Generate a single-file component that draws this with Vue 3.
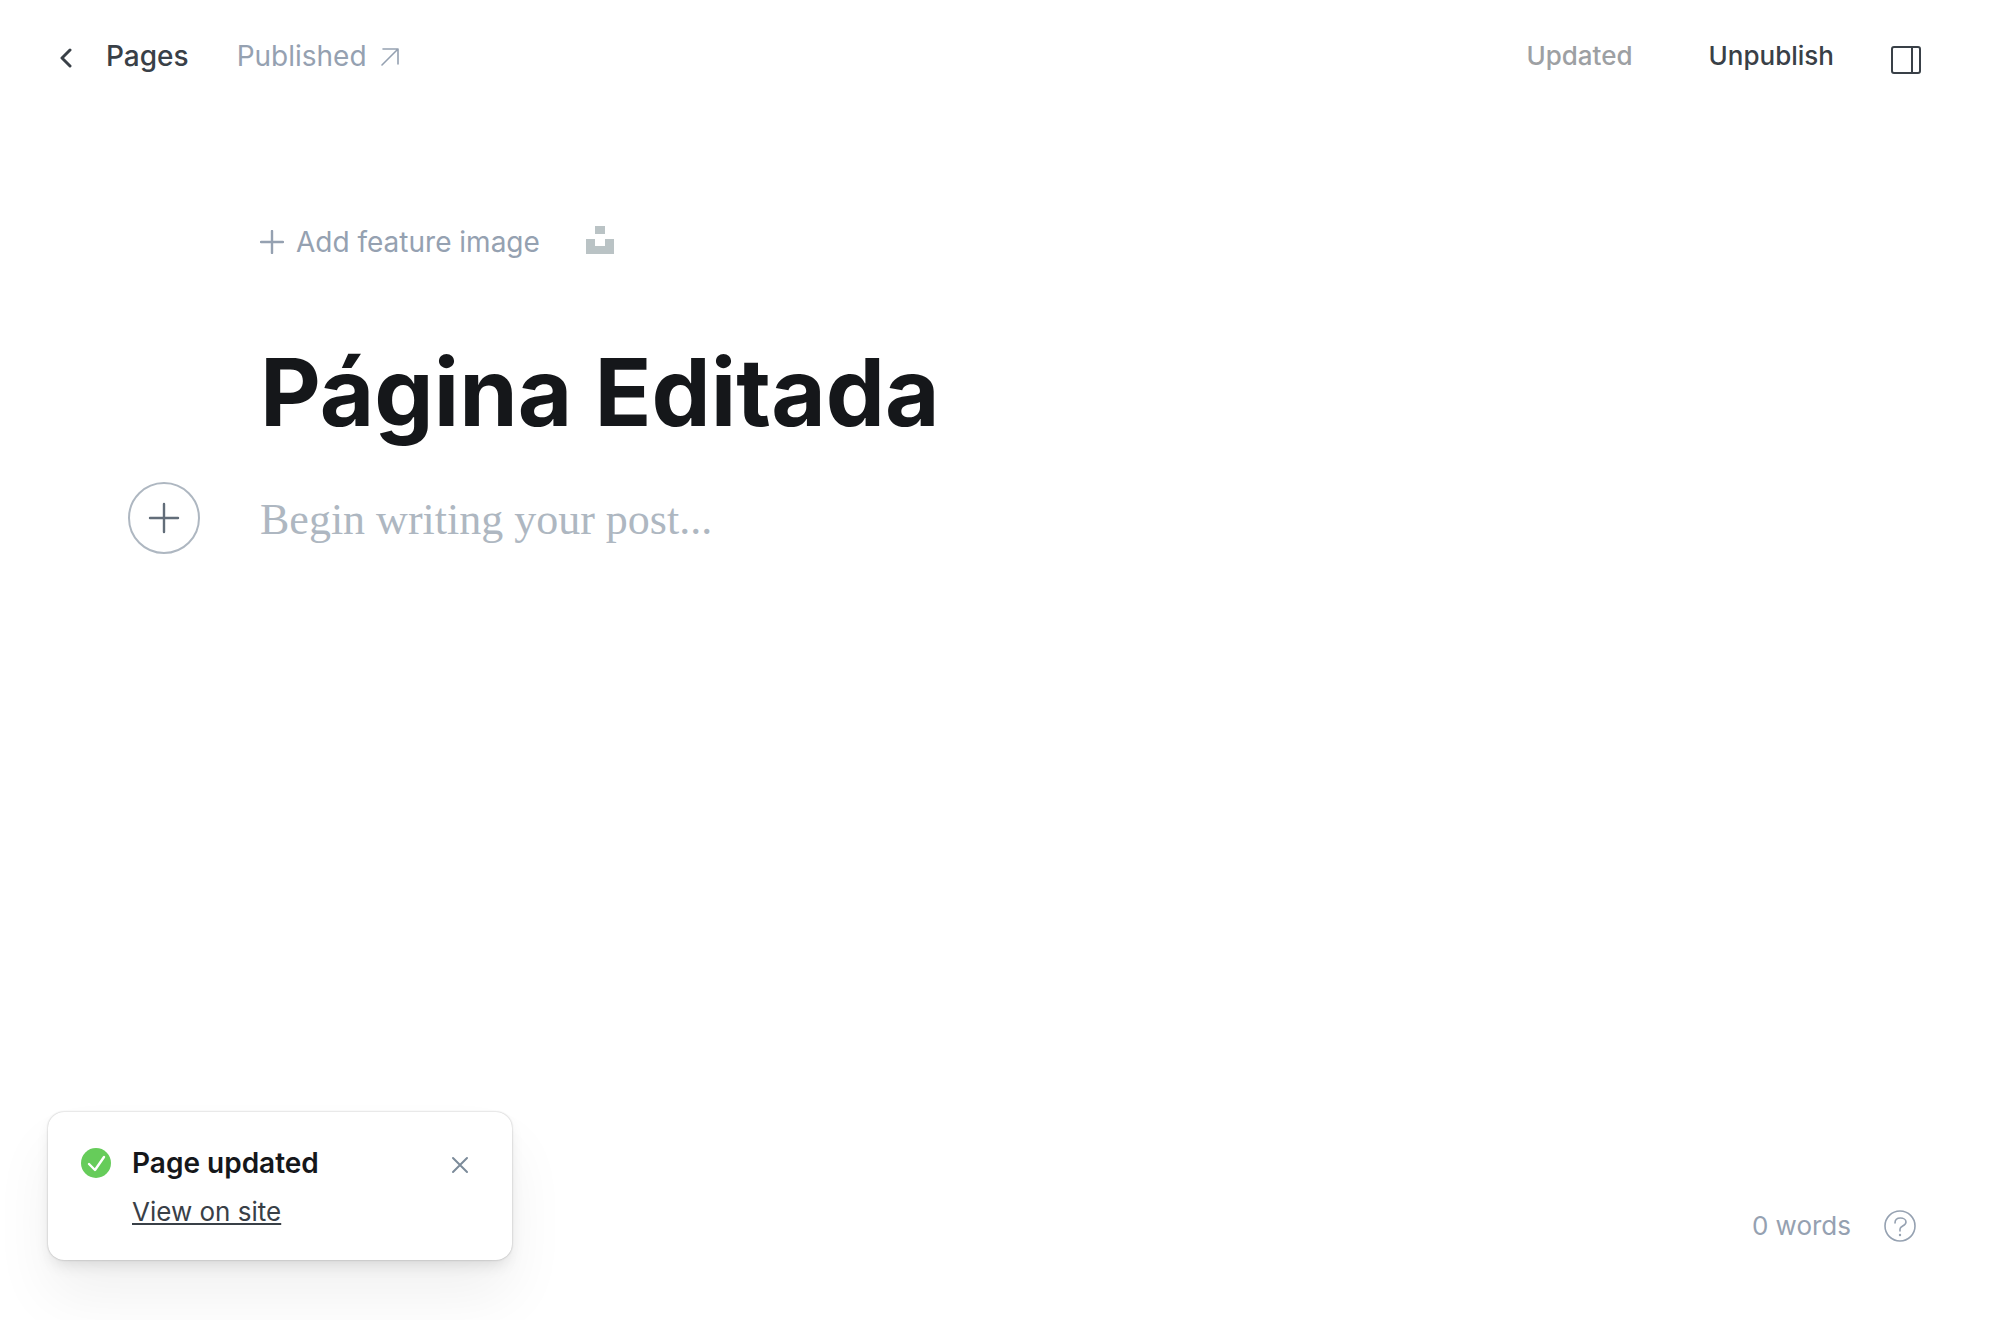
<script setup>
import { ref } from 'vue'

const title = ref('Página Editada')
const body = ref('')
const showToast = ref(true)
</script>

<template>
  <div class="editor">
    <header class="topbar">
      <nav class="group">
        <a class="back" href="#pages">
          <svg width="12" height="24" viewBox="0 0 12 24" fill="none" stroke="currentColor" stroke-width="3" stroke-linecap="round" stroke-linejoin="round"><path d="m10 6-8 8 8 8" /></svg>
          Pages
        </a>
        <a class="status" href="#published">
          Published
          <svg width="20" height="20" viewBox="0 0 20 20" fill="none" stroke="currentColor" stroke-width="1.6" stroke-linecap="round" stroke-linejoin="round"><path d="M3 3h15v15M18 3 2 19" /></svg>
        </a>
      </nav>
      <div class="group">
        <button class="action updated" type="button">Updated</button>
        <button class="action" type="button">Unpublish</button>
        <button class="sidebar-toggle" type="button" aria-label="Settings">
          <svg width="32" height="30" viewBox="0 0 32 30" fill="none" stroke="currentColor" stroke-width="2"><rect x="2" y="2" width="28" height="26" rx="2" /><path d="M22 2v26" /></svg>
        </button>
      </div>
    </header>

    <main class="content">
      <div class="feature">
        <button class="add-image" type="button">
          <svg width="24" height="24" viewBox="0 0 24 24" fill="none" stroke="currentColor" stroke-width="2.4" stroke-linecap="round"><path d="M12 1v22M1 12h22" /></svg>
          Add feature image
        </button>
        <button class="unsplash" type="button" aria-label="Unsplash">
          <svg width="28" height="28" viewBox="0 0 28 28" fill="currentColor"><path d="M9 0h10v8H9zM0 13h9v7h10v-7h9v15H0z" /></svg>
        </button>
      </div>
      <input v-model="title" class="title" type="text" aria-label="Title" />
      <div class="body-row">
        <button class="add-card" type="button" aria-label="Add a card">
          <svg width="32" height="32" viewBox="0 0 32 32" fill="none" stroke="currentColor" stroke-width="2.4" stroke-linecap="round"><path d="M16 2v28M2 16h28" /></svg>
        </button>
        <input v-model="body" class="body" type="text" aria-label="Body" placeholder="Begin writing your post..." />
      </div>
    </main>

    <footer class="footer">
      <span>0 words</span>
      <a class="help" href="#help" aria-label="Help">
        <svg width="34" height="34" viewBox="0 0 34 34" fill="none" stroke="currentColor" stroke-width="1.6" stroke-linecap="round" stroke-linejoin="round"><circle cx="17" cy="17" r="15" /><path d="M12 14c0-7 11-6 11-1 0 4-6 4-6 7v2" /><circle cx="17" cy="26" r="1.2" fill="currentColor" stroke="none" /></svg>
      </a>
    </footer>

    <aside v-if="showToast" class="toast" role="status">
      <svg class="check" width="30" height="30" viewBox="0 0 30 30" fill="none"><circle cx="15" cy="15" r="15" fill="#66cc5a" /><path d="m8 16 6 6 9-13" stroke="#fff" stroke-width="2.4" stroke-linecap="round" stroke-linejoin="round" /></svg>
      <div class="message">
        <strong>Page updated</strong>
        <a href="#view">View on site</a>
      </div>
      <button class="close" type="button" aria-label="Close" @click="showToast = false">
        <svg width="18" height="18" viewBox="0 0 18 18" fill="none" stroke="currentColor" stroke-width="2" stroke-linecap="round"><path d="m2 2 14 14M16 2 2 16" /></svg>
      </button>
    </aside>
  </div>
</template>

<style>
body {
  margin: 0;
  background: #fff;
}
</style>

<style scoped>
.editor {
  position: relative;
  box-sizing: border-box;
  display: flex;
  flex-direction: column;
  min-height: 100vh;
  overflow: hidden;
  font-family: Inter, "Liberation Sans", sans-serif;
  font-size: 28px;
  line-height: 36px;
  color: #394047;
}

svg {
  display: block;
  flex: none;
}

button {
  padding: 0;
  border: 0;
  background: none;
  font: inherit;
  color: inherit;
  cursor: pointer;
}

a {
  color: inherit;
  text-decoration: none;
}

.topbar {
  display: flex;
  justify-content: space-between;
  align-items: center;
  height: 112px;
  padding: 0 78px 0 60px;
}

.group {
  display: flex;
  align-items: center;
}

.back {
  display: flex;
  align-items: center;
  gap: 34px;
  margin-right: 48px;
  font-weight: 500;
}

.status {
  display: flex;
  align-items: center;
  gap: 13px;
  color: #95a1b1;
}

.action {
  margin-right: 56px;
  font-size: 26px;
  font-weight: 500;
}

.updated {
  margin-right: 76px;
  color: #9da0a3;
}

.sidebar-toggle {
  padding-top: 8px;
}

.content {
  flex: 1;
  padding: 112px 128px 0;
}

.feature {
  display: flex;
  align-items: center;
  gap: 46px;
  margin-left: 132px;
  color: #95a1b1;
}

.add-image {
  display: flex;
  align-items: center;
  gap: 12px;
}

.unsplash {
  padding-bottom: 4px;
  color: #bac3c5;
}

.title {
  display: block;
  box-sizing: border-box;
  width: 100%;
  height: 116px;
  margin-top: 74px;
  padding: 0 0 0 132px;
  border: 0;
  outline: 0;
  background: none;
  font: 700 94px/116px Inter, "Liberation Sans", sans-serif;
  color: #15171a;
}

.body-row {
  display: flex;
  align-items: center;
  gap: 60px;
  margin-top: 32px;
}

.add-card {
  display: flex;
  flex: none;
  align-items: center;
  justify-content: center;
  box-sizing: border-box;
  width: 72px;
  height: 72px;
  border: 2px solid #aeb7c1;
  border-radius: 50%;
  color: #626d79;
}

.body {
  flex: 1;
  min-width: 0;
  padding: 4px 0 0;
  border: 0;
  outline: 0;
  background: none;
  font: 44px/60px "Liberation Serif", serif;
  color: #15171a;
}

.body::placeholder {
  color: #aeb7c1;
  opacity: 1;
}

.footer {
  display: flex;
  justify-content: flex-end;
  align-items: center;
  gap: 32px;
  padding: 0 83px 76px;
  font-size: 26px;
  color: #95a1b1;
}

.toast {
  position: absolute;
  bottom: 60px;
  left: 48px;
  display: flex;
  align-items: flex-start;
  gap: 21px;
  box-sizing: border-box;
  width: 464px;
  padding: 32px 43px 28px 33px;
  border-radius: 16px;
  background: #fff;
  box-shadow: 0 0 2px rgba(0, 0, 0, 0.3), 0 8px 16px -4px rgba(0, 0, 0, 0.12), 0 36px 60px rgba(0, 0, 0, 0.06);
}

.check {
  margin-top: 4px;
}

.message {
  display: flex;
  flex: 1;
  flex-direction: column;
  align-items: flex-start;
  gap: 10px;
}

.message strong {
  font-size: 28px;
  line-height: 38px;
  font-weight: 600;
  color: #15171a;
}

.message a {
  line-height: 40px;
  font-size: 26px;
  text-decoration: underline;
}

.close {
  margin-top: 12px;
  color: #7c8b9a;
}
</style>
